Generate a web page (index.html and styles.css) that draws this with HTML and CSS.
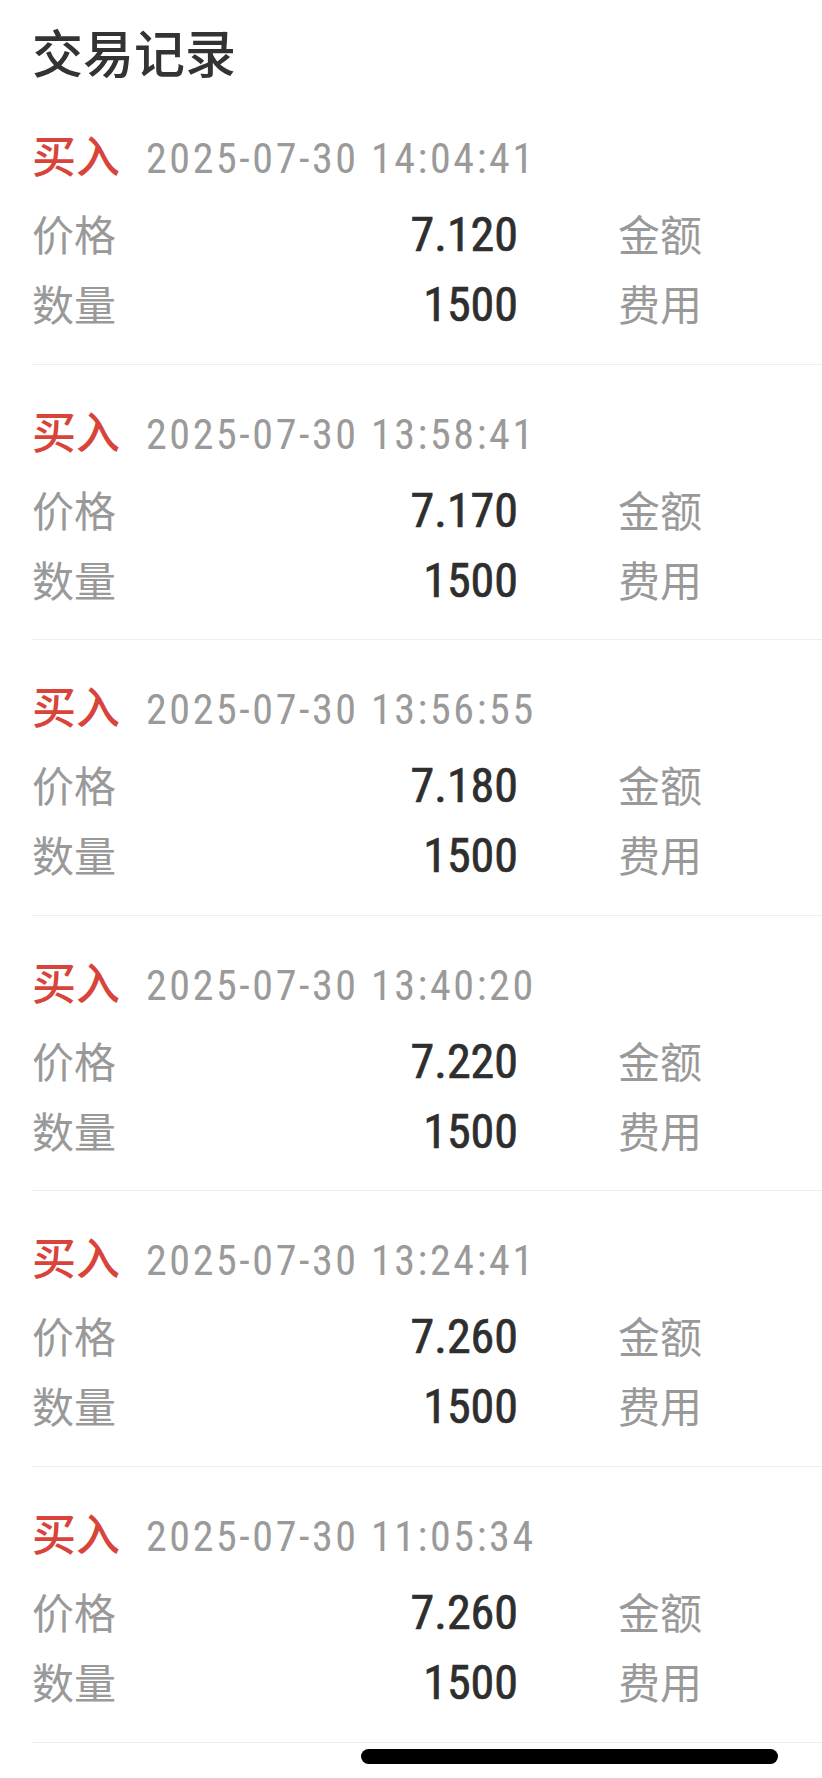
FILE: index.html
```html
<!DOCTYPE html>
<html lang="zh-CN">
<head>
<meta charset="utf-8">
<title>交易记录</title>
<link rel="stylesheet" href="styles.css">
</head>
<body>
<div class="page">
  <h1 class="title">交易记录</h1>
  <ul class="records">
    <li class="record">
      <div class="head"><span class="side">买入</span><span class="time">2025-07-30 14:04:41</span></div>
      <div class="row"><span class="label">价格</span><span class="value">7.120</span><span class="label2">金额</span></div>
      <div class="row"><span class="label">数量</span><span class="value">1500</span><span class="label2">费用</span></div>
    </li>
    <li class="record">
      <div class="head"><span class="side">买入</span><span class="time">2025-07-30 13:58:41</span></div>
      <div class="row"><span class="label">价格</span><span class="value">7.170</span><span class="label2">金额</span></div>
      <div class="row"><span class="label">数量</span><span class="value">1500</span><span class="label2">费用</span></div>
    </li>
    <li class="record">
      <div class="head"><span class="side">买入</span><span class="time">2025-07-30 13:56:55</span></div>
      <div class="row"><span class="label">价格</span><span class="value">7.180</span><span class="label2">金额</span></div>
      <div class="row"><span class="label">数量</span><span class="value">1500</span><span class="label2">费用</span></div>
    </li>
    <li class="record">
      <div class="head"><span class="side">买入</span><span class="time">2025-07-30 13:40:20</span></div>
      <div class="row"><span class="label">价格</span><span class="value">7.220</span><span class="label2">金额</span></div>
      <div class="row"><span class="label">数量</span><span class="value">1500</span><span class="label2">费用</span></div>
    </li>
    <li class="record">
      <div class="head"><span class="side">买入</span><span class="time">2025-07-30 13:24:41</span></div>
      <div class="row"><span class="label">价格</span><span class="value">7.260</span><span class="label2">金额</span></div>
      <div class="row"><span class="label">数量</span><span class="value">1500</span><span class="label2">费用</span></div>
    </li>
    <li class="record">
      <div class="head"><span class="side">买入</span><span class="time">2025-07-30 11:05:34</span></div>
      <div class="row"><span class="label">价格</span><span class="value">7.260</span><span class="label2">金额</span></div>
      <div class="row"><span class="label">数量</span><span class="value">1500</span><span class="label2">费用</span></div>
    </li>
  </ul>
  <div class="home-indicator"></div>
</div>
</body>
</html>
```

FILE: styles.css
```css
html, body {
  margin: 0;
  padding: 0;
  background: #ffffff;
}

body {
  font-family: "Noto Sans CJK SC", "Noto Sans", sans-serif;
  overflow: hidden;
}

.page {
  position: relative;
  width: 822px;
  height: 1778px;
  overflow: hidden;
}

.title {
  margin: 0;
  padding: 15px 0 0 32px;
  height: 74px;
  line-height: 72px;
  font-size: 51px;
  font-weight: 500;
  color: #333333;
}

.records {
  list-style: none;
  margin: 0 0 0 32px;
  padding: 0;
}

.record {
  padding: 29px 0 25.6px 0;
  border-bottom: 1px solid #eeeeee;
}

.head {
  display: flex;
  align-items: baseline;
  height: 72px;
  line-height: 72px;
}

.side {
  font-size: 44px;
  color: #d8443a;
  font-weight: 500;
}

.time {
  margin-left: 26px;
  font-family: "Roboto Condensed", Roboto, "Noto Sans", sans-serif;
  font-size: 42px;
  letter-spacing: 2.6px;
  color: #9a9a9a;
}

.row {
  display: flex;
  align-items: baseline;
  height: 70px;
  line-height: 70px;
}

.head + .row {
  margin-top: 8px;
}

.label,
.label2 {
  font-size: 42px;
  color: #999999;
  flex: none;
}

.label {
  width: 100px;
}

.value {
  width: 386px;
  flex: none;
  text-align: right;
  font-family: "Roboto Condensed", Roboto, "Noto Sans", sans-serif;
  font-size: 48px;
  font-weight: 400;
  color: #2e2e2e;
  -webkit-text-stroke: 0.7px #2e2e2e;
}

.label2 {
  margin-left: 100px;
}

.home-indicator {
  position: absolute;
  left: 361px;
  top: 1749px;
  width: 417px;
  height: 15px;
  border-radius: 8px;
  background: #000000;
}
```
